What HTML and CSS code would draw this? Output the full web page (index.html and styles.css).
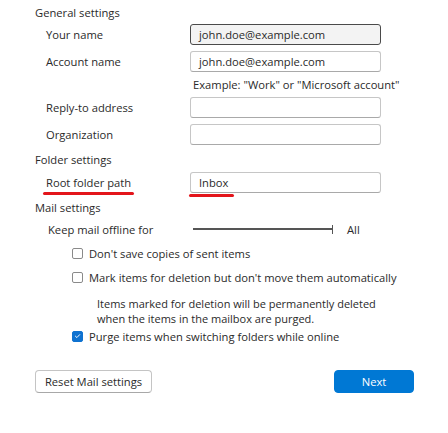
FILE: index.html
```html
<!DOCTYPE html>
<html lang="en">
<head>
<meta charset="utf-8">
<title>Account settings</title>
<link rel="stylesheet" href="styles.css">
</head>
<body>
<div class="page">
  <div class="heading">General settings</div>
  <div class="field first">
    <span class="label">Your name</span>
    <span class="input focused">john.doe@example.com</span>
  </div>
  <div class="field">
    <span class="label">Account name</span>
    <span class="input">john.doe@example.com</span>
  </div>
  <div class="hint">Example: "Work" or "Microsoft account"</div>
  <div class="field tight">
    <span class="label">Reply-to address</span>
    <span class="input"></span>
  </div>
  <div class="field">
    <span class="label">Organization</span>
    <span class="input"></span>
  </div>

  <div class="heading section">Folder settings</div>
  <div class="field folder">
    <span class="label"><span class="mark">Root folder path</span></span>
    <span class="input"><span class="mark mark-input">Inbox</span></span>
  </div>

  <div class="heading section">Mail settings</div>
  <div class="offline">
    <span class="label offline-label">Keep mail offline for</span>
    <span class="slider"><span class="track"></span><span class="tick"></span></span>
    <span class="all">All</span>
  </div>
  <label class="check">
    <span class="box"></span>
    <span>Don't save copies of sent items</span>
  </label>
  <label class="check">
    <span class="box"></span>
    <span>Mark items for deletion but don't move them automatically</span>
  </label>
  <p class="note">Items marked for deletion will be permanently deleted<br>when the items in the mailbox are purged.</p>
  <label class="check purge">
    <span class="box checked">
      <svg viewBox="0 0 12 12" width="12" height="12"><path d="M3.2 6.2 L5.2 8.1 L8.9 4.2" fill="none" stroke="#fff" stroke-width="1.3" stroke-linecap="round" stroke-linejoin="round"/></svg>
    </span>
    <span>Purge items when switching folders while online</span>
  </label>

  <div class="actions">
    <button class="btn">Reset Mail settings</button>
    <button class="btn primary">Next</button>
  </div>
</div>
</body>
</html>
```
FILE: styles.css
```css
* { box-sizing: border-box; }

html, body {
  margin: 0;
  background: #ffffff;
}

body {
  font-family: "Open Sans", "Noto Sans", sans-serif;
  font-size: 11.2px;
  color: #2a2a2a;
}

.page {
  width: 414px;
  padding-left: 35px;
}

.heading {
  height: 20px;
  line-height: 20px;
  margin-top: 3px;
}

.heading.section {
  margin-top: 5px;
}

.field {
  display: flex;
  align-items: center;
  height: 21px;
  margin-top: 6px;
}

.field.first { margin-top: 1px; }
.field.tight { margin-top: 0; }
.field.folder { margin-top: 2px; }

.label {
  width: 155px;
  padding-left: 11px;
  flex: none;
}

.input {
  display: flex;
  align-items: center;
  width: 191px;
  height: 21px;
  padding-left: 8px;
  border: 1px solid #c6c6c6;
  border-bottom-color: #a9a9a9;
  border-radius: 3px;
  background: #ffffff;
}

.input.focused {
  background: #f3f3f3;
  border: 1.5px solid #4a4a4a;
}

.hint {
  height: 25px;
  line-height: 25px;
  padding-left: 158px;
}

.mark {
  position: relative;
}

.mark::after {
  content: "";
  position: absolute;
  left: -3px;
  right: -3px;
  bottom: -5px;
  height: 3px;
  border-radius: 2px;
  background: #e3151b;
}

.mark-input::after {
  left: -10px;
  right: -6px;
  bottom: -7px;
}

.offline {
  display: flex;
  align-items: center;
  height: 20px;
  margin-top: 1px;
}

.offline-label {
  padding-left: 13px;
}

.slider {
  position: relative;
  display: flex;
  align-items: center;
  width: 140px;
  height: 10px;
  margin-left: 3px;
}

.track {
  flex: 1;
  height: 1.5px;
  background: #555555;
}

.tick {
  width: 1.5px;
  height: 9px;
  background: #555555;
}

.all {
  margin-left: 14px;
}

.check {
  display: flex;
  align-items: center;
  gap: 6px;
  height: 20px;
  margin-top: 4px;
  padding-left: 37px;
}

.box {
  display: flex;
  align-items: center;
  justify-content: center;
  width: 11px;
  height: 11px;
  border: 1px solid #8a8a8a;
  border-radius: 2px;
  background: #ffffff;
  flex: none;
}

.box.checked {
  background: #0f72d0;
  border-color: #0f72d0;
}

.note {
  margin: 9px 0 0 62px;
  font-size: 11px;
  line-height: 15px;
}

.check.purge {
  margin-top: 0;
}

.actions {
  display: flex;
  justify-content: space-between;
  margin-top: 24px;
}

.btn {
  height: 23px;
  padding: 0 8px;
  font: inherit;
  color: #2a2a2a;
  background: #ffffff;
  border: 1px solid #c4c4c4;
  border-bottom-color: #a8a8a8;
  border-radius: 4px;
  width: 117px;
}

.btn.primary {
  width: 80px;
  color: #ffffff;
  background: #0078d4;
  border-color: #0078d4;
}
```
